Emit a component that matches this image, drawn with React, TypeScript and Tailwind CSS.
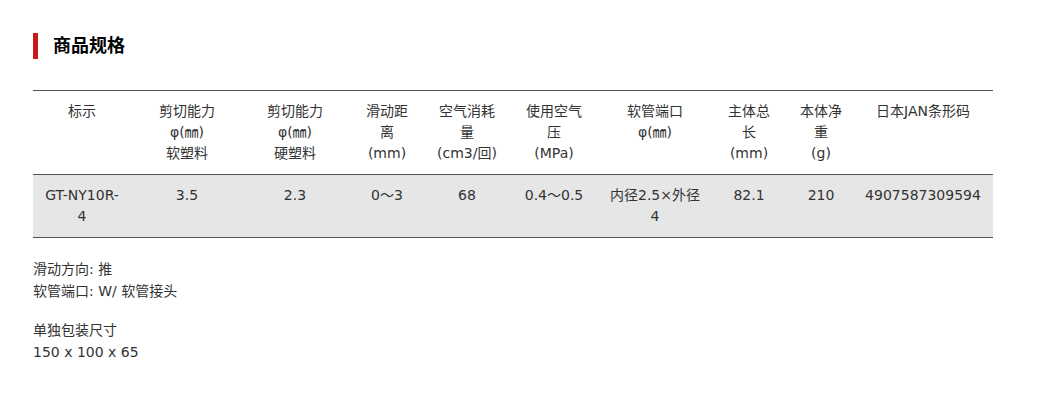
const headers: React.ReactNode[] = [
  <>标示</>,
  <>剪切能力<br />φ(㎜)<br />软塑料</>,
  <>剪切能力<br />φ(㎜)<br />硬塑料</>,
  <>滑动距<br />离<br />(mm)</>,
  <>空气消耗<br />量<br />(cm3/回)</>,
  <>使用空气<br />压<br />(MPa)</>,
  <>软管端口<br />φ(㎜)</>,
  <>主体总<br />长<br />(mm)</>,
  <>本体净<br />重<br />(g)</>,
  <>日本JAN条形码</>,
];

const cells: React.ReactNode[] = [
  <>GT-NY10R-<br />4</>,
  <>3.5</>,
  <>2.3</>,
  <>0～3</>,
  <>68</>,
  <>0.4～0.5</>,
  <>内径2.5×外径<br />4</>,
  <>82.1</>,
  <>210</>,
  <>4907587309594</>,
];

const widths = [98, 112, 104, 80, 80, 94, 108, 80, 64, 140];

function App() {
  return (
    <div
      className="min-h-[416px] bg-white pl-[33px] pt-[33px] text-[14px] leading-[21px] text-[#333]"
      style={{ fontFamily: '"DejaVu Sans", "Noto Sans CJK SC", sans-serif' }}
    >
      <div className="flex items-center gap-[15px]">
        <div className="h-[26px] w-[5px] bg-[#c8161d]" />
        <h2 className="text-[18px] font-bold leading-[26px] text-black">商品规格</h2>
      </div>

      <table className="mt-[31px] w-[960px] table-fixed border-collapse">
        <colgroup>
          {widths.map((w, i) => (
            <col key={i} style={{ width: w }} />
          ))}
        </colgroup>
        <thead>
          <tr className="border-t border-b border-[#555]">
            {headers.map((h, i) => (
              <th key={i} className="px-0 pt-[10px] pb-[10px] text-center align-top font-normal">
                {h}
              </th>
            ))}
          </tr>
        </thead>
        <tbody>
          <tr className="border-b border-[#555] bg-[#e6e6e6]">
            {cells.map((c, i) => (
              <td key={i} className="px-0 pt-[10px] pb-[10px] text-center align-top">
                {c}
              </td>
            ))}
          </tr>
        </tbody>
      </table>

      <div className="mt-[20px] leading-[22px]">
        <p>滑动方向: 推</p>
        <p>软管端口: W/ 软管接头</p>
      </div>
      <div className="mt-[17px] leading-[22px]">
        <p>单独包装尺寸</p>
        <p>150 x 100 x 65</p>
      </div>
    </div>
  );
}

export default App;
